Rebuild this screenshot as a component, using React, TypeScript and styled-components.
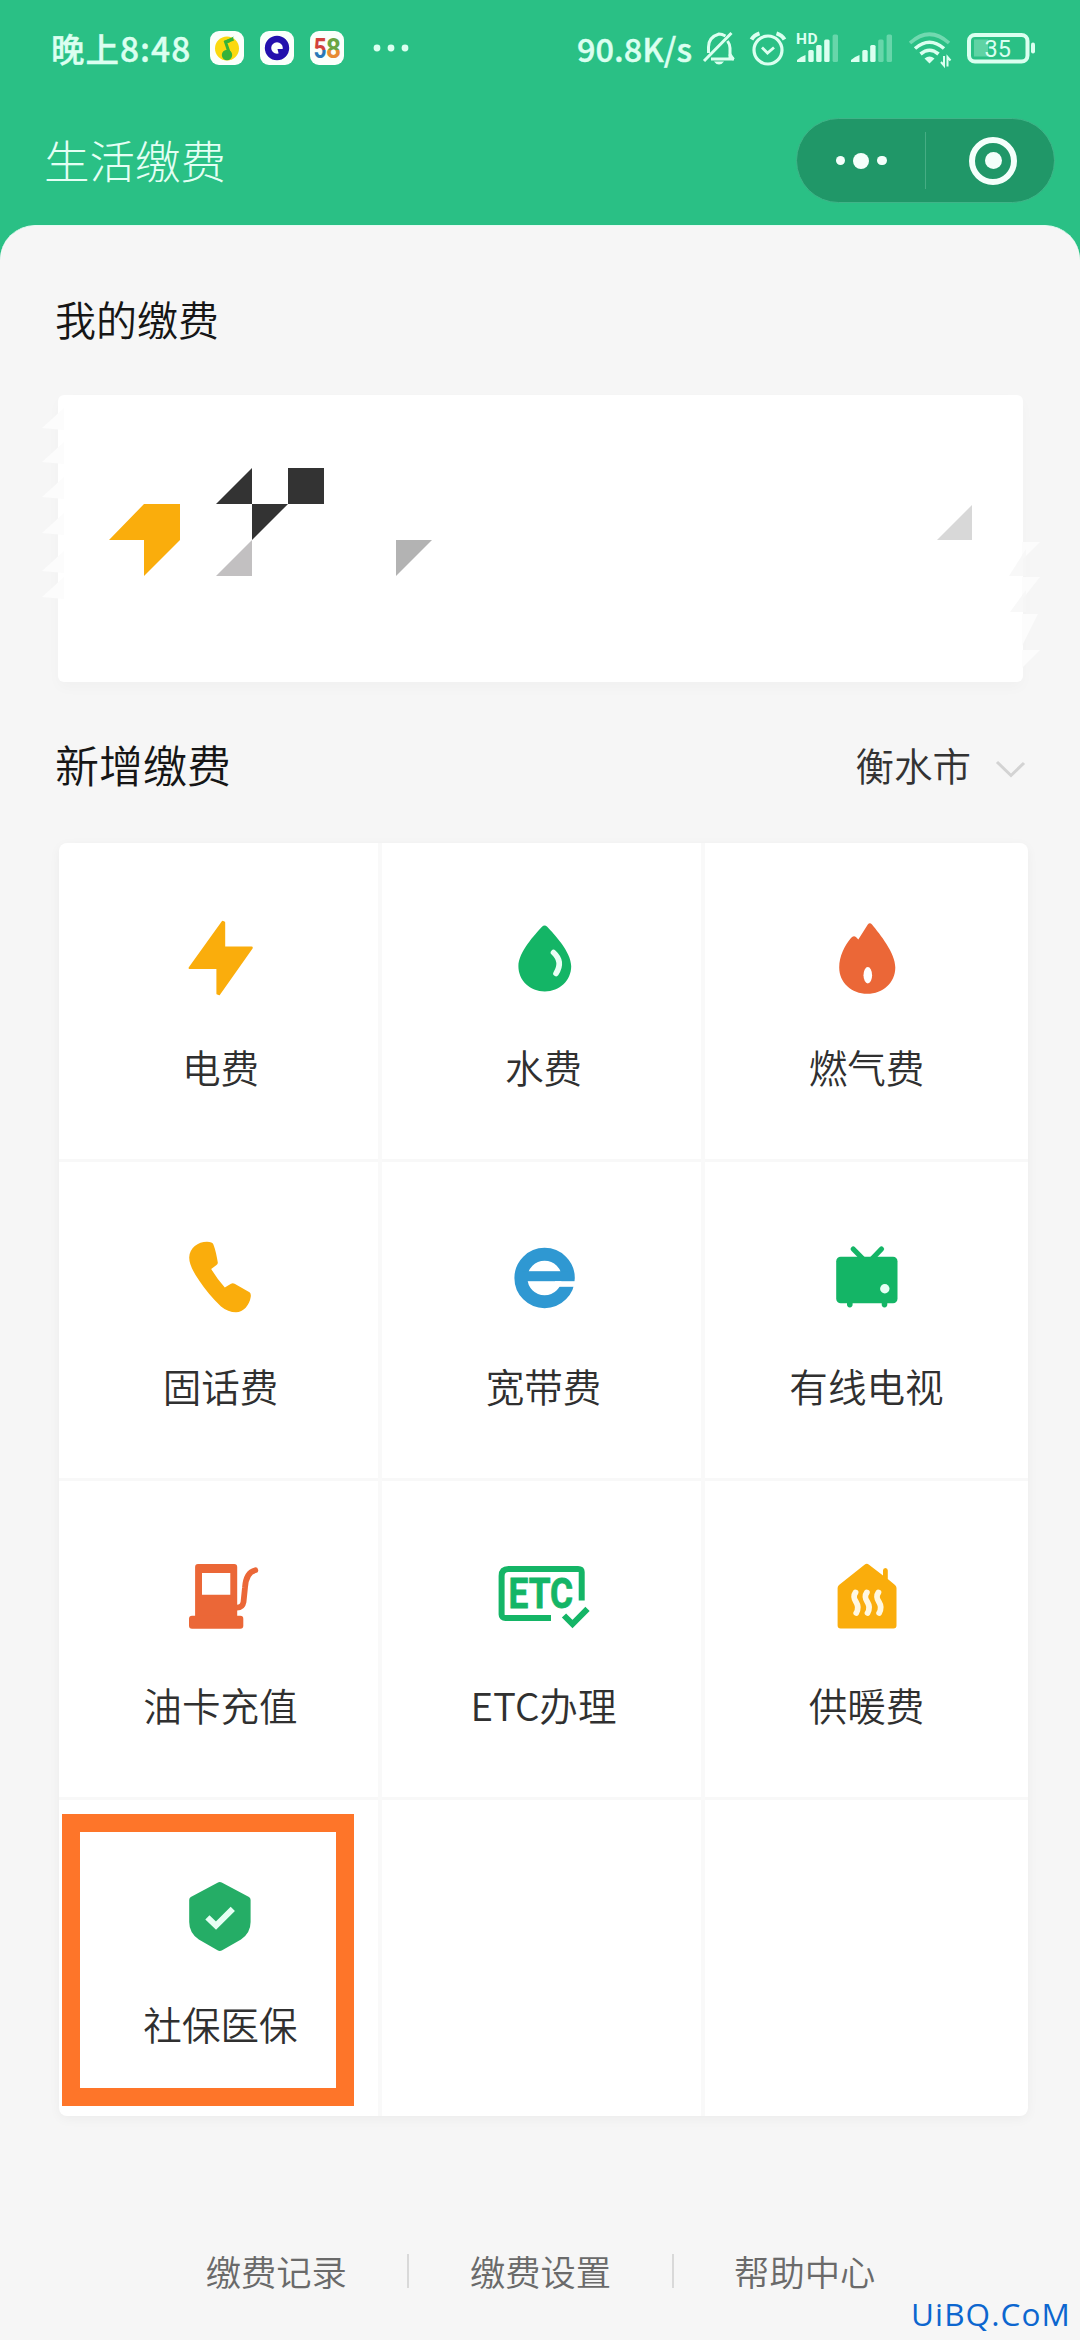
import React from 'react';
import styled, { createGlobalStyle } from 'styled-components';

const GREEN = '#14b566';
const AMBER = '#faad0c';
const CORAL = '#eb6737';
const PALE = '#dbfff0';

const GlobalStyle = createGlobalStyle`
  * { box-sizing: border-box; }
  body {
    margin: 0;
    background: #2ac085;
    font-family: 'Noto Sans CJK SC', 'Noto Sans', sans-serif;
  }
`;

const Screen = styled.div`
  position: relative;
  width: 1080px;
  height: 2340px;
  overflow: hidden;
  display: flex;
  flex-direction: column;
  background: #2ac085;
`;

/* ---------- status bar ---------- */

const StatusBar = styled.header`
  height: 96px;
  display: flex;
  align-items: center;
  justify-content: space-between;
  padding: 0 45px 0 51px;
  color: ${PALE};
`;

const StatusGroup = styled.div<{ $gap: number }>`
  display: flex;
  align-items: center;
  gap: ${(p) => p.$gap}px;
`;

const Clock = styled.span`
  width: 143px;
  font-size: 33.5px;
  font-weight: 500;
  line-height: 40px;
  letter-spacing: 1px;
  white-space: nowrap;
  -webkit-text-stroke: 0.4px ${PALE};
`;

const Speed = styled.span`
  width: 118px;
  font-size: 32.5px;
  font-weight: 500;
  line-height: 40px;
  white-space: nowrap;
  -webkit-text-stroke: 0.4px ${PALE};
`;

const AppBadge = styled.svg`
  width: 34px;
  height: 34px;
  border-radius: 9px;
  background: #fbfffb;
`;

const MoreDots = styled.svg`
  width: 36px;
  height: 8px;
  margin-left: 13px;
`;

const StatusIcon = styled.svg<{ $w: number; $ml: number }>`
  width: ${(p) => p.$w}px;
  height: 40px;
  margin-left: ${(p) => p.$ml}px;
  flex: none;
  overflow: visible;
`;

/* ---------- title bar ---------- */

const NavBar = styled.div`
  height: 129px;
  display: flex;
  align-items: center;
  justify-content: space-between;
  padding: 0 25px 0 44px;
`;

const NavTitle = styled.h1`
  margin: 0 0 3px;
  font-size: 45.5px;
  font-weight: 300;
  line-height: 60px;
  color: #e4fff4;
`;

const Capsule = styled.div`
  width: 259px;
  height: 85px;
  border-radius: 43px;
  border: 1px solid #3fb488;
  background: #209768;
  display: flex;
  align-items: center;
`;

const CapsuleMenu = styled.div`
  flex: 1;
  display: flex;
  align-items: center;
  justify-content: center;
  gap: 8px;
`;

const CapsuleDot = styled.span<{ $size: number }>`
  width: ${(p) => p.$size}px;
  height: ${(p) => p.$size}px;
  border-radius: 50%;
  background: #f4fffb;
`;

const CapsuleDivider = styled.span`
  width: 1px;
  height: 57px;
  background: #46ad84;
`;

const CapsuleClose = styled.div`
  width: 128px;
  display: flex;
  justify-content: center;
  padding-left: 6px;
`;

const TargetRing = styled.div`
  width: 48px;
  height: 48px;
  border: 6.5px solid #f4fffb;
  border-radius: 50%;
  display: flex;
  align-items: center;
  justify-content: center;
`;

/* ---------- sheet ---------- */

const Sheet = styled.main`
  flex: 1;
  padding: 0 52px 0 55px;
  border-radius: 35px 35px 0 0;
  border-top: 1px solid #e4fbf2;
  background: #f6f6f6;
`;

const SectionHead = styled.div<{ $top: number; $height: number }>`
  height: ${(p) => p.$height}px;
  padding-top: ${(p) => p.$top}px;
  display: flex;
  align-items: flex-start;
  justify-content: space-between;
`;

const SectionTitle = styled.h2<{ $size: number }>`
  margin: 0;
  font-size: ${(p) => p.$size}px;
  font-weight: 350;
  line-height: 60px;
  color: #161616;
`;

const CityPicker = styled.div`
  display: flex;
  align-items: center;
  gap: 24px;
  padding-right: 2px;
  font-size: 38.5px;
  font-weight: 350;
  line-height: 60px;
  color: #333;
`;

const Chevron = styled.svg`
  width: 31px;
  height: 20px;
  margin-top: 9px;
`;

const MyBills = styled.section`
  height: 287px;
  margin: 0 5px 0 3px;
  background: #fff;
  border-radius: 6px;
  box-shadow: 0 6px 14px rgba(0, 0, 0, 0.025);
`;

const Mosaic = styled.svg`
  display: block;
  width: 965px;
  height: 287px;
  overflow: visible;
`;

const Services = styled.section`
  width: 969px;
  margin-left: 4px;
  display: grid;
  grid-template-columns: repeat(3, 323px);
  grid-template-rows: 319px 319px 319px 316px;
  background: #fff;
  border-radius: 8px;
  box-shadow: 0 3px 12px rgba(0, 0, 0, 0.045);
`;

const Cell = styled.div<{ $right: boolean; $bottom: boolean }>`
  position: relative;
  display: flex;
  flex-direction: column;
  align-items: center;
  padding-top: 69px;
  box-shadow:
    inset ${(p) => (p.$right ? '-4px' : '0')} 0 0 #f9f9f9,
    inset 0 ${(p) => (p.$bottom ? '-3px' : '0')} 0 #f8f8f8;
`;

const CellIcon = styled.svg`
  width: 100px;
  height: 90px;
  overflow: visible;
`;

const CellLabel = styled.span`
  margin-top: 34px;
  font-size: 38.6px;
  font-weight: 350;
  line-height: 60px;
  color: #303030;
  white-space: nowrap;
`;

const HighlightFrame = styled.div`
  position: absolute;
  left: 3px;
  top: 14px;
  width: 292px;
  height: 292px;
  border: 18px solid #fe7529;
`;

const FooterLinks = styled.footer`
  display: flex;
  align-items: center;
  justify-content: center;
  padding: 125px 2px 0 0;
`;

const FooterLink = styled.a`
  font-size: 35.3px;
  font-weight: 350;
  line-height: 60px;
  color: #6a6a6a;
`;

const FooterDivider = styled.span`
  width: 2px;
  height: 34px;
  margin: 0 60.5px;
  background: #d9d9d9;
`;

const Watermark = styled.span`
  position: absolute;
  right: 9px;
  bottom: 4px;
  font-family: 'Open Sans', 'Noto Sans', sans-serif;
  font-size: 31.5px;
  font-weight: 500;
  line-height: 44px;
  letter-spacing: 1.1px;
  color: #0c66cf;
`;

/* ---------- service icons, drawn on a 100 x 90 canvas ---------- */

const BoltIcon = () => (
  <path
    d="M51.8 10 53 10.5V35.8H80.6L48 82 46.6 81.4V55.9H18.8Z"
    fill={AMBER} stroke={AMBER} strokeWidth="2.4" strokeLinejoin="round"
  />
);

const DropIcon = () => (
  <>
    <path d="M48 14.8Q50.6 12.4 53.2 14.8C60 22 77.2 40 77.2 54.2C77.2 68.4 65.5 79.4 50.8 79.4S24.4 68.4 24.4 54.2C24.4 40 41 22.5 48 14.8Z" fill={GREEN} />
    <path d="M59.5 40.5Q69.5 49.5 62 61.5" fill="none" stroke="#e9fff5" strokeWidth="5.6" strokeLinecap="round" />
  </>
);

const FlameIcon = () => (
  <>
    <path d="M50.8 12.6Q52.8 9.8 55 12.6C63 22.5 78.3 41 78.3 55.5C78.3 70.5 66 81.8 50.3 81.8S22.2 70.5 22.2 55.5C22.2 44 27.5 34 34 26Q36.5 23 39.2 25.2L41.3 27.4Z" fill={CORAL} />
    <ellipse cx="50.8" cy="63.3" rx="4.3" ry="8.2" fill="#fff" />
  </>
);

const PhoneIcon = () => (
  <path
    d="M18.2 26.5C18.5 17 27 10.8 36 10.8Q41.5 10.8 42.4 13.5C44.5 19 46 26 46.8 31.5Q46.9 33 45.5 34L40.2 38Q45.5 47 53.8 56.6L60 52.7Q61.8 51.6 63.6 52.7L78.5 61.3Q80.3 62.5 79.7 66C78.5 74 72.5 81.3 65 81.3Q57 81.3 50 75.5Q37 63 28.5 50Q18.2 35.5 18.2 26.5Z"
    fill={AMBER}
  />
);

const BroadbandIcon = () => (
  <>
    <circle cx="50.6" cy="47" r="23.7" fill="none" stroke="#2f98d2" strokeWidth="13" />
    <rect x="28" y="40.2" width="46" height="10" fill="#2f98d2" />
    <rect x="61" y="50.2" width="22" height="5.6" fill="#fff" />
  </>
);

const TvIcon = () => (
  <>
    <path d="M36.2 18 49 31M64.5 18 52 31" stroke={GREEN} strokeWidth="5.2" strokeLinecap="round" />
    <path d="M32.8 70V73.6M67.5 70V73.6" stroke={GREEN} strokeWidth="5.6" strokeLinecap="round" />
    <rect x="19.2" y="25.8" width="61.3" height="46.4" rx="4.5" fill={GREEN} />
    <circle cx="67.8" cy="57.7" r="4.7" fill="#e6fff4" />
  </>
);

const PumpIcon = () => (
  <>
    <path
      fillRule="evenodd"
      d="M27 14H63.2Q66.2 14 66.2 17V66H24.1V17Q24.1 14 27 14ZM31 23V44.7H59.3V23Z"
      fill={CORAL}
    />
    <rect x="18" y="65.8" width="54.3" height="13" rx="3" fill={CORAL} />
    <path d="M66 57.6Q71.5 57.6 72.5 52L74 37.5Q75 22.5 84.3 20.3" fill="none" stroke={CORAL} strokeWidth="5.8" strokeLinecap="round" />
  </>
);

const EtcIcon = () => (
  <>
    <path d="M57 68H11.5Q7.6 68 7.6 64.5V26Q7.6 19 14.5 19H84Q87.7 19 87.7 22V50.5" fill="none" stroke={GREEN} strokeWidth="6" />
    <text
      x="14.5" y="58" textLength="64.5" lengthAdjust="spacingAndGlyphs"
      fontFamily="Roboto, 'Liberation Sans', sans-serif" fontSize="42" fontWeight="700"
      fill={GREEN} stroke={GREEN} strokeWidth="0.8"
    >
      ETC
    </text>
    <path d="M70 65.5 78.5 74 93.5 58.8" fill="none" stroke={GREEN} strokeWidth="6" />
  </>
);

const HouseIcon = () => (
  <>
    <path
      d="M47.5 14.7Q49.8 13 52 14.7L66 25.5V20.5Q66 18 68.4 18T70.8 20.5V29L78 35Q79.5 36.3 79.5 38V75.5Q79.5 78.5 76.5 78.5H23.6Q20.6 78.5 20.6 75.5V38Q20.6 36.3 22 35Z"
      fill={AMBER}
    />
    {[0, 11.3, 22.9].map((dx) => (
      <path
        key={dx}
        d="M38.5 42.5C34 49 41 52 40.8 57Q40.8 61 39.3 63"
        transform={`translate(${dx} 0)`}
        fill="none" stroke="#fff8e2" strokeWidth="5.8" strokeLinecap="round"
      />
    ))}
  </>
);

const ShieldIcon = () => (
  <>
    <path
      d="M46.5 13.7Q48.8 12.3 51.2 13.7L78 28Q79.6 29 79.6 31V53Q79.6 64 70 70.5L51.2 81.2Q48.8 82.6 46.5 81.2L27.8 70.5Q18.2 64 18.2 53V31Q18.2 29 19.8 28Z"
      fill="#25ad66"
    />
    <path d="M36.4 48.3 45 56.6 61.8 39.8" fill="none" stroke="#e6fff4" strokeWidth="6" />
  </>
);

type Service = { label: string; Icon: React.FC; highlighted?: boolean } | null;

const services: Service[] = [
  { label: '电费', Icon: BoltIcon },
  { label: '水费', Icon: DropIcon },
  { label: '燃气费', Icon: FlameIcon },
  { label: '固话费', Icon: PhoneIcon },
  { label: '宽带费', Icon: BroadbandIcon },
  { label: '有线电视', Icon: TvIcon },
  { label: '油卡充值', Icon: PumpIcon },
  { label: 'ETC办理', Icon: EtcIcon },
  { label: '供暖费', Icon: HouseIcon },
  { label: '社保医保', Icon: ShieldIcon, highlighted: true },
  null,
  null,
];

const bars = [
  { x: 11.3, top: 22 },
  { x: 19.2, top: 17 },
  { x: 27.2, top: 11.5 },
  { x: 35.6, top: 6.5 },
];

/* A rounded wedge followed by four bars; bars past the signal level are dimmed. */
const SignalBars = ({ lit }: { lit: number }) => (
  <g fill={PALE}>
    <path d="M0 34V32Q4 28.500 8.500 27V34Z" />
    {bars.map((bar, i) => (
      <rect key={bar.x} x={bar.x} y={bar.top} width="5.4" height={34 - bar.top} rx="1.5" opacity={i < lit ? 1 : 0.35} />
    ))}
  </g>
);

export default function App() {
  return (
    <>
      <GlobalStyle />
      <Screen>
        <StatusBar>
          <StatusGroup $gap={16}>
            <Clock>晚上8:48</Clock>
            <AppBadge viewBox="0 0 34 34">
              <circle cx="17" cy="17.5" r="12" fill="#fbd90f" />
              <circle cx="17" cy="24" r="5.2" fill="#35b23a" />
              <path d="M20 24 15.5 11 23.5 8" fill="none" stroke="#35b23a" strokeWidth="3" />
              <path d="M14 10 24 5.5 19 12Z" fill="#35b23a" />
            </AppBadge>
            <AppBadge viewBox="0 0 34 34">
              <circle cx="17" cy="17" r="9" fill="none" stroke="#2310ad" strokeWidth="6.4" />
              <path d="M17.5 18H24V24H19Z" fill="#2310ad" />
            </AppBadge>
            <AppBadge viewBox="0 0 34 34">
              <defs>
                <linearGradient id="five" x1="0" y1="0" x2="0" y2="1">
                  <stop offset="0.52" stopColor="#d2413c" />
                  <stop offset="0.52" stopColor="#2a78b8" />
                </linearGradient>
                <linearGradient id="eight" x1="0" y1="0" x2="0" y2="1">
                  <stop offset="0.53" stopColor="#6aa544" />
                  <stop offset="0.53" stopColor="#e78b33" />
                </linearGradient>
              </defs>
              <g fontFamily="Roboto, sans-serif" fontWeight="700" fontSize="27">
                <text x="3.5" y="27" textLength="13" lengthAdjust="spacingAndGlyphs" fill="url(#five)">5</text>
                <text x="16" y="27" textLength="15" lengthAdjust="spacingAndGlyphs" fill="url(#eight)">8</text>
              </g>
            </AppBadge>
            <MoreDots viewBox="0 0 36 8">
              {[4, 18, 32].map((x) => (
                <circle key={x} cx={x} cy="4" r="3.4" fill={PALE} />
              ))}
            </MoreDots>
          </StatusGroup>

          <StatusGroup $gap={0}>
            <Speed>90.8K/s</Speed>
            <StatusIcon $w={34} $ml={7} viewBox="0 0 34 40" fill="none" stroke={PALE} strokeWidth="3">
              <path d="M9 31H32M28 30V20Q28 16.5 25.5 13M6.500 25V19C6.500 11.500 10.500 8 17 6Q20 6 23.500 8" />
              <path d="M27.500 26 31.500 31.500M2 33 29.500 5" />
              <path d="M12 33.500H22Q20 36.500 17 36.500T12 33.500Z" fill={PALE} stroke="none" />
            </StatusIcon>
            <StatusIcon $w={36} $ml={14} viewBox="0 0 36 40" fill="none" stroke={PALE} strokeWidth="3.2">
              <circle cx="18" cy="22" r="14" />
              <path d="M12 19.500 17.500 25 24 19.500" strokeWidth="2.800" />
              <path d="M1.500 11.500Q4 7 9.500 5.300M34.500 11.500Q32 7 26.500 5.300" strokeWidth="4" />
            </StatusIcon>
            <StatusIcon $w={42} $ml={11} viewBox="0 0 42 40">
              <text x="-1" y="15.5" fontFamily="Roboto, sans-serif" fontSize="15.5" fontWeight="700" letterSpacing="0.5" fill={PALE}>HD</text>
              <SignalBars lit={3} />
            </StatusIcon>
            <StatusIcon $w={42} $ml={12} viewBox="0 0 42 40">
              <SignalBars lit={2} />
            </StatusIcon>
            <StatusIcon $w={42} $ml={16} viewBox="0 0 42 40" fill="none" stroke={PALE} strokeWidth="3.6">
              <path d="M1 15Q20.5 -2.5 40 15" opacity="0.4" />
              <path d="M6 20.5Q20.5 8 35 20.5" />
              <path d="M11.5 26Q20.5 18.5 29.5 26" />
              <path d="M15.5 30.5Q20.5 26.5 25.5 30.5L20.5 35.5Z" fill={PALE} stroke="none" />
              <path d="M35 28V37.5L32 34M38.5 38.5V29L41.5 32.5" strokeWidth="2" />
            </StatusIcon>
            <StatusIcon $w={68} $ml={16} viewBox="0 0 68 40">
              <rect x="2" y="7" width="58.5" height="26.5" rx="6" fill="none" stroke={PALE} strokeWidth="4" />
              <rect x="7" y="11.5" width="14" height="17" fill={PALE} opacity="0.3" />
              <rect x="64" y="14.5" width="4" height="11" rx="2" fill={PALE} />
              <text x="17.5" y="28.5" fontFamily="Roboto, sans-serif" fontSize="23.5" fill={PALE}>35</text>
            </StatusIcon>
          </StatusGroup>
        </StatusBar>

        <NavBar>
          <NavTitle>生活缴费</NavTitle>
          <Capsule>
            <CapsuleMenu>
              <CapsuleDot $size={9.5} />
              <CapsuleDot $size={16} />
              <CapsuleDot $size={9.5} />
            </CapsuleMenu>
            <CapsuleDivider />
            <CapsuleClose>
              <TargetRing>
                <CapsuleDot $size={17} />
              </TargetRing>
            </CapsuleClose>
          </Capsule>
        </NavBar>

        <Sheet>
          <SectionHead $top={62} $height={169}>
            <SectionTitle $size={41}>我的缴费</SectionTitle>
          </SectionHead>

          <MyBills>
            <Mosaic viewBox="58 395 965 287">
              <g fill="#fcfcfc">
                {[428, 462, 497, 533, 571, 597].map((y) => (
                  <path key={y} d={`M64 ${y - 20}V${y + 2}L42 ${y}Z`} />
                ))}
                <path d="M1022 542H1040L1022 560ZM1022 577H1040L1022 600ZM1022 614H1038L1022 646ZM1022 650H1040L1022 668Z" />
              </g>
              <path d="M1026 549V576H1009ZM1026 590V612H1010Z" fill="#f6f6f6" opacity="0.8" />
              <path d="M144 504H180V540L144 576V540H109Z" fill={AMBER} />
              <path d="M252 468V504H216ZM288 468H324V504H288ZM252 504H288L252 540Z" fill="#333" />
              <path d="M252 540V576H216Z" fill="#c2c0c1" />
              <path d="M396 540H432L396 576Z" fill="#b3b3b3" />
              <path d="M972 505V540H937Z" fill="#d8d8d8" />
            </Mosaic>
          </MyBills>

          <SectionHead $top={52} $height={161}>
            <SectionTitle $size={44}>新增缴费</SectionTitle>
            <CityPicker>
              衡水市
              <Chevron viewBox="0 0 31 20" fill="none" stroke="#d3d3d3" strokeWidth="3">
                <path d="M2 3 16 16.500 29 4" />
              </Chevron>
            </CityPicker>
          </SectionHead>

          <Services>
            {services.map((service, i) => (
              <Cell key={i} $right={i % 3 < 2} $bottom={i < 9}>
                {service && (
                  <>
                    <CellIcon viewBox="0 0 100 90">
                      <service.Icon />
                    </CellIcon>
                    <CellLabel>{service.label}</CellLabel>
                    {service.highlighted && <HighlightFrame />}
                  </>
                )}
              </Cell>
            ))}
          </Services>

          <FooterLinks>
            <FooterLink>缴费记录</FooterLink>
            <FooterDivider />
            <FooterLink>缴费设置</FooterLink>
            <FooterDivider />
            <FooterLink>帮助中心</FooterLink>
          </FooterLinks>
        </Sheet>

        <Watermark>UiBQ.CoM</Watermark>
      </Screen>
    </>
  );
}
